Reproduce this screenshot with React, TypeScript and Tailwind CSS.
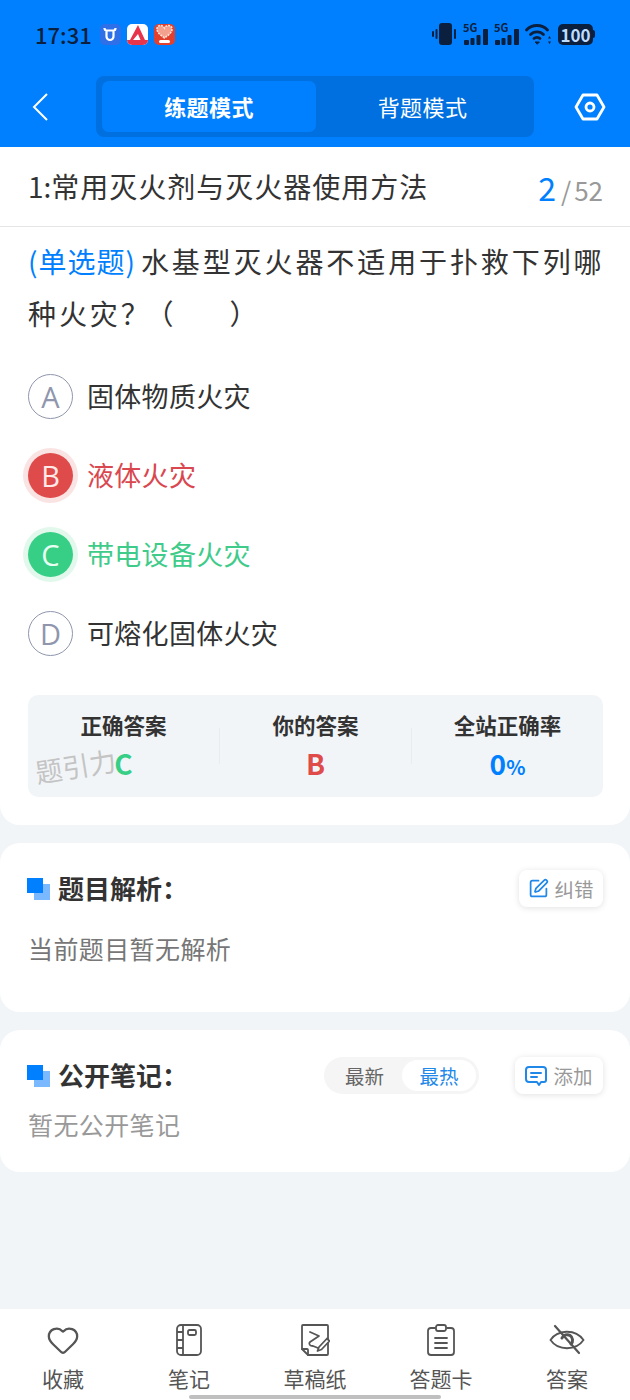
import { Heart, SquarePen } from "lucide-react";

const options = [
  { key: "A", text: "固体物质火灾", state: "none" },
  { key: "B", text: "液体火灾", state: "wrong" },
  { key: "C", text: "带电设备火灾", state: "right" },
  { key: "D", text: "可熔化固体火灾", state: "none" },
];

function StatusIcons() {
  return (
    <div className="flex items-center gap-[3px] text-[#0b1f3f]">
      {/* vibrate */}
      <svg width="28" height="24" viewBox="0 0 28 24" fill="currentColor">
        <rect x="7" y="1" width="13" height="22" rx="3" />
        <rect x="3.500" y="7" width="2" height="10" rx="1" />
        <rect x="0" y="9" width="2" height="6" rx="1" />
        <rect x="22" y="7" width="2" height="10" rx="1" />
      </svg>
      {[0, 1].map((i) => (
        <div key={i} className="relative mr-[2px] h-[24px] w-[26px]">
          <span className="absolute left-0 top-[-1px] text-[11px] font-bold leading-[13px]">5G</span>
          <svg width="26" height="24" viewBox="0 0 26 24" fill="currentColor" className="absolute left-0 top-0">
            <rect x="1" y="18" width="5" height="5" rx="1" />
            <rect x="7.500" y="16" width="4" height="7" rx="1" />
            <rect x="13.500" y="13" width="4" height="10" rx="1" />
            <rect x="20" y="7" width="5" height="16" rx="1" />
          </svg>
        </div>
      ))}
      <svg width="27" height="24" viewBox="0 0 27 24" fill="none" stroke="currentColor" strokeWidth="2.800" strokeLinecap="round">
        <path d="M1.500 8C7 2 17 2 22.500 8" />
        <path d="M5.500 12.500C9 9 15 9 18.500 12.500" />
        <path d="M9 16.500C10.500 15 13.500 15 15 16.500" />
        <path d="M12 22l-2-2h4z" fill="currentColor" strokeWidth="1" />
        <path d="M24.500 14l-1.500 2.500h3zM24.500 22l-1.500-2.500h3z" fill="currentColor" stroke="none" />
      </svg>
      <div className="ml-[3px] flex items-center">
        <div className="flex h-[21px] w-[35px] items-center justify-center rounded-[5px] bg-[#0b1f3f] text-[17px] font-semibold leading-none text-[#bfdcff]">
          100
        </div>
        <div className="h-[8px] w-[2px] rounded-r-sm bg-[#0b1f3f]" />
      </div>
    </div>
  );
}

function AppIcons() {
  return (
    <div className="flex items-center gap-[6px]">
      <div className="flex h-[21px] w-[21px] items-center justify-center rounded-[5px] bg-[#2f6fe8]">
        <svg width="14" height="15" viewBox="0 0 14 15" fill="none" stroke="#fff" strokeWidth="2.200">
          <path d="M1.500 1c0 2 1 2.500 2 2.500h7c1 0 2-.5 2-2.500M3.500 3.500v6a3.500 3.500 0 0 0 7 0v-6" />
        </svg>
      </div>
      <div className="relative flex h-[21px] w-[21px] items-start justify-center overflow-hidden rounded-[5px] bg-white">
        <svg width="17" height="15" viewBox="0 0 17 15" fill="#e8344a" className="mt-[1px]">
          <path d="M9 0l7 15h-4.500L9 9l-5 6H1z" />
        </svg>
        <div className="absolute bottom-0 h-[5px] w-full bg-[#e8344a]" />
      </div>
      <div className="flex h-[21px] w-[21px] flex-col items-center overflow-hidden rounded-[5px] bg-[#e2402f]">
        <svg width="17" height="15" viewBox="0 0 17 15" fill="#f3a08e" stroke="#ffe3d8" strokeWidth="1.600" strokeDasharray="2 1">
          <path d="M8.500 14C3 10 1 8 1 5 1 1 6.500 0 8.500 4 10.500 0 16 1 16 5c0 3-2 5-7.500 9z" />
        </svg>
        <div className="mt-[1px] h-[3px] w-[11px] rounded-sm bg-white" />
      </div>
    </div>
  );
}

function Header() {
  return (
    <header className="h-[147px] shrink-0 bg-[#0080ff]">
      <div className="flex h-[68px] items-center justify-between pl-[35px] pr-[35px]">
        <div className="flex items-center gap-[8px]">
          <span className="text-[22px] font-medium leading-none text-[#0b1f3f]">17:31</span>
          <AppIcons />
        </div>
        <StatusIcons />
      </div>
      <div className="mt-[8px] flex h-[61px] items-center">
        <div className="flex w-[96px] justify-start pl-[32px]">
          <svg width="16" height="28" viewBox="0 0 16 28" fill="none" stroke="#fff" strokeWidth="2">
            <path d="M15 1 2 14l13 13" />
          </svg>
        </div>
        <div className="flex h-[61px] w-[438px] rounded-[8px] bg-[#0070e0] p-[5px]">
          <div className="ml-[1px] flex w-[214px] items-center justify-center rounded-[7px] bg-[#0080ff] text-[22px] font-bold tracking-[0.4px] text-white">
            练题模式
          </div>
          <div className="flex flex-1 items-center justify-center text-[22px] tracking-[0.4px] text-white">背题模式</div>
        </div>
        <div className="flex flex-1 justify-end pr-[24px]">
          <svg width="32" height="28" viewBox="0 0 32 28" fill="none" stroke="#fff" strokeWidth="2.800" strokeLinejoin="round">
            <path d="M9 2h14l7 12-7 12H9L2 14z" />
            <circle cx="16" cy="14" r="4" />
          </svg>
        </div>
      </div>
    </header>
  );
}

function OptionRow({ k, text, state }: { k: string; text: string; state: string }) {
  const circle =
    state === "wrong"
      ? "bg-[#df4a4a] text-[#ffe9e9] ring-[5px] ring-[#fae3e3]"
      : state === "right"
        ? "bg-[#36cf85] text-[#e9fff4] ring-[5px] ring-[#e2f8ec]"
        : "border border-[#8f96ad] text-[#8f96ad]";
  const color = state === "wrong" ? "text-[#d9474f]" : state === "right" ? "text-[#3fcb8a]" : "text-[#333333]";
  return (
    <div className="flex h-[79px] items-center">
      <div className={`flex h-[45px] w-[45px] items-center justify-center rounded-full font-['Open_Sans',sans-serif] text-[29px] ${circle}`}>
        {k}
      </div>
      <span className={`ml-[14px] pb-[2px] text-[27px] leading-none tracking-[0.3px] ${color}`}>{text}</span>
    </div>
  );
}

function Stat({ label, children }: { label: string; children: React.ReactNode }) {
  return (
    <div className="flex flex-1 flex-col items-center pb-[3px]">
      <span className="text-[21.5px] font-bold leading-[28px] text-[#333333]">{label}</span>
      <div className="mt-[8px] h-[32px] text-[28px] font-bold leading-[32px]">{children}</div>
    </div>
  );
}

function SectionTitle({ children }: { children: React.ReactNode }) {
  return (
    <div className="flex items-center gap-[8px]">
      <div className="relative -ml-[1px] h-[22px] w-[23px] shrink-0">
        <div className="absolute bottom-0 right-0 h-[16px] w-[16px] bg-[#7ab9ff]" />
        <div className="absolute left-0 top-0 h-[15px] w-[16px] bg-[#0080ff]" />
      </div>
      <span className="pb-[2px] text-[26px] font-bold leading-none text-[#333333]">{children}</span>
    </div>
  );
}

function BottomItem({ icon, label }: { icon: React.ReactNode; label: string }) {
  return (
    <div className="flex w-[126px] flex-col items-center">
      <div className="flex h-[34px] items-center justify-center">{icon}</div>
      <span className="mt-[7px] text-[21px] leading-[28px] text-[#555555]">{label}</span>
    </div>
  );
}

export default function App() {
  return (
    <div className="relative flex h-[1400px] w-[630px] flex-col overflow-hidden bg-[#f2f5f8] font-['Noto_Sans_CJK_SC','Noto_Sans',sans-serif]">
      <Header />

      <div className="h-[678px] shrink-0 rounded-b-[20px] bg-white">
        <div className="flex h-[80px] items-center justify-between border-b border-[#e5e5e5] pl-[28px] pr-[27px]">
          <span className="pb-[2px] text-[28px] leading-none tracking-[1px] text-[#333333]">
            <span className="tracking-normal">1:</span>常用灭火剂与灭火器使用方法
          </span>
          <div className="flex items-baseline text-[#999999]">
            <span className="text-[32px] leading-none text-[#0080ff]">2</span>
            <span className="ml-[5px] text-[26px] leading-none">/</span>
            <span className="ml-[3px] text-[26px] leading-none">52</span>
          </div>
        </div>

        <div className="pl-[28px] pr-[20px] pt-[8px]">
          <p className="text-[28px] leading-[52px] tracking-[2.9px] text-[#333333]">
            <span className="mr-[5px] tracking-[1px] text-[#0080ff]">(单选题)</span>
            水基型灭火器不适用于扑救下列哪种火灾？<span className="-ml-[6px]">（</span><span className="inline-block w-[53px]" />）
          </p>
          <div className="mt-[18px]">
            {options.map((o) => (
              <OptionRow key={o.key} k={o.key} text={o.text} state={o.state} />
            ))}
          </div>

          <div className="relative mr-[7px] mt-[22px] flex h-[102px] items-center rounded-[10px] bg-[#f2f5f8]">
            <Stat label="正确答案">
              <span className="text-[#36cf85]">C</span>
            </Stat>
            <div className="h-[36px] w-px bg-[#e8ebef]" />
            <Stat label="你的答案">
              <span className="text-[#df4a4a]">B</span>
            </Stat>
            <div className="h-[36px] w-px bg-[#e8ebef]" />
            <Stat label="全站正确率">
              <span className="text-[#0080ff]">
                0<span className="text-[20px]">%</span>
              </span>
            </Stat>
            {/* watermark over the card */}
            <span className="absolute left-[7px] top-[57px] -rotate-[9deg] text-[27px] leading-none text-[#c4c4c4]">
              题引力
            </span>
          </div>
        </div>
      </div>

      <section className="mt-[18px] h-[169px] shrink-0 rounded-[20px] bg-white px-[28px] pt-[27px]">
        <div className="flex h-[37px] items-center justify-between">
          <SectionTitle>题目解析：</SectionTitle>
          <div className="-mr-[1px] flex h-[37px] w-[84px] items-center justify-center gap-[5px] rounded-[8px] bg-white shadow-[0_1px_6px_rgba(0,0,0,0.12)]">
            <SquarePen size={21} strokeWidth={2} className="text-[#1f88e8]" />
            <span className="text-[19.500px] leading-none text-[#999999]">纠错</span>
          </div>
        </div>
        <p className="mt-[29px] text-[25px] leading-none tracking-[0.4px] text-[#777777]">当前题目暂无解析</p>
      </section>

      <section className="mt-[18px] h-[142px] shrink-0 rounded-[20px] bg-white px-[28px] pt-[27px]">
        <div className="flex h-[37px] items-center">
          <SectionTitle>公开笔记：</SectionTitle>
          <div className="ml-auto flex h-[37px] w-[155px] items-center rounded-full bg-[#f5f5f5] p-[3px]">
            <div className="flex w-[75px] items-center justify-center text-[19.500px] leading-none text-[#666666]">最新</div>
            <div className="flex h-[31px] flex-1 items-center justify-center rounded-full bg-white text-[19.500px] leading-none text-[#1f88e8]">
              最热
            </div>
          </div>
          <div className="-mr-[1px] ml-[36px] flex h-[37px] w-[88px] items-center justify-center gap-[6px] rounded-[8px] bg-white shadow-[0_1px_6px_rgba(0,0,0,0.12)]">
            <svg width="22" height="22" viewBox="0 0 22 22" fill="none" stroke="#1f88e8" strokeWidth="2" strokeLinejoin="round" strokeLinecap="round">
              <path d="M4 2h14a3 3 0 0 1 3 3v10a2 2 0 0 1-2 2h-3l-2 3-2-3H4a3 3 0 0 1-3-3V5a3 3 0 0 1 3-3z" />
              <path d="M6 8h10M6 12h6" />
            </svg>
            <span className="text-[19.500px] leading-none text-[#999999]">添加</span>
          </div>
        </div>
        <p className="mt-[18px] text-[25px] leading-none tracking-[0.4px] text-[#999999]">暂无公开笔记</p>
      </section>

      <nav className="mt-auto flex h-[91px] shrink-0 justify-between bg-white pt-[14px]">
        <BottomItem label="收藏" icon={<Heart size={34} strokeWidth={1.6} className="text-[#555555]" />} />
        <BottomItem
          label="笔记"
          icon={
            <svg width="26" height="32" viewBox="0 0 26 32" fill="none" stroke="#555555" strokeWidth="1.800">
              <rect x="1" y="1" width="24" height="30" rx="4" />
              <path d="M7 1v30M1 8h6M1 16h6M1 24h6" />
              <rect x="12" y="6" width="8" height="5" rx="1.500" />
            </svg>
          }
        />
        <BottomItem
          label="草稿纸"
          icon={
            <svg width="30" height="32" viewBox="0 0 30 32" fill="none" stroke="#555555" strokeWidth="1.800" strokeLinejoin="round" strokeLinecap="round">
              <path d="M3 1h24a1 1 0 0 1 1 1v28a1 1 0 0 1-1 1H8l-6-6V2a1 1 0 0 1 1-1z" />
              <path d="M2 25h5a1 1 0 0 1 1 1v5" />
              <path d="M10 8l9 4-9 6c-2 2 0 4 3 4l5 2" />
              <path d="M19 23l-1.500 4 4-1.500 8-8.500-2.500-2.500z" fill="#ffffff" />
            </svg>
          }
        />
        <BottomItem
          label="答题卡"
          icon={
            <svg width="28" height="32" viewBox="0 0 28 32" fill="none" stroke="#555555" strokeWidth="1.800" strokeLinecap="round">
              <path d="M8 4H4a3 3 0 0 0-3 3v21a3 3 0 0 0 3 3h20a3 3 0 0 0 3-3V7a3 3 0 0 0-3-3h-4" />
              <rect x="9" y="1" width="10" height="6" rx="2" />
              <path d="M8 14h12M8 19h12M8 24h12" />
            </svg>
          }
        />
        <BottomItem
          label="答案"
          icon={
            <svg width="36" height="32" viewBox="0 0 36 32" fill="none" stroke="#555555" strokeWidth="1.800" strokeLinecap="round">
              <path d="M1.500 16C8 6 26 4 34.500 16 27 27 9 27 1.500 16z" />
              <path d="M13 14a5.500 5.500 0 1 1 9 6" strokeWidth="3" />
              <path d="M6 2l24 27" strokeWidth="2.200" stroke="#555555" />
            </svg>
          }
        />
      </nav>

      {/* home indicator */}
      <div className="absolute bottom-[1px] left-[189px] h-[4px] w-[252px] rounded-full bg-[#bfbfbf]" />
    </div>
  );
}
